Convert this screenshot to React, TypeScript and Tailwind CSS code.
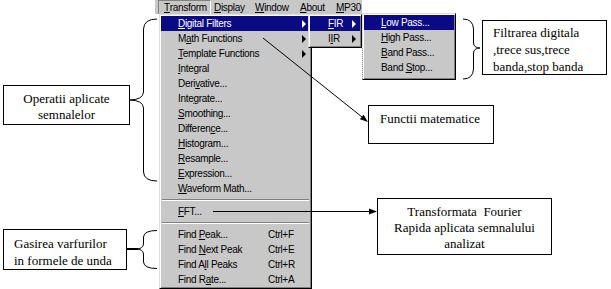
import React from "react";

type Item = {
	label: React.ReactNode;
	shortcut?: string;
	sub?: boolean;
	active?: boolean;
};

const mainItems: (Item | "sep")[] = [
	{ label: <><u>D</u>igital Filters</>, sub: true, active: true },
	{ label: <>M<u>a</u>th Functions</>, sub: true },
	{ label: <><u>T</u>emplate Functions</>, sub: true },
	{ label: <><u>I</u>ntegral</> },
	{ label: <>Deri<u>v</u>ative...</> },
	{ label: <>Inte<u>g</u>rate...</> },
	{ label: <><u>S</u>moothing...</> },
	{ label: <>Differen<u>c</u>e...</> },
	{ label: <><u>H</u>istogram...</> },
	{ label: <><u>R</u>esample...</> },
	{ label: <><u>E</u>xpression...</> },
	{ label: <><u>W</u>aveform Math...</> },
	"sep",
	{ label: <><u>F</u>FT...</> },
	"sep",
	{ label: <>Find <u>P</u>eak...</>, shortcut: "Ctrl+F" },
	{ label: <>Find <u>N</u>ext Peak</>, shortcut: "Ctrl+E" },
	{ label: <>Find A<u>l</u>l Peaks</>, shortcut: "Ctrl+R" },
	{ label: <>Find R<u>a</u>te...</>, shortcut: "Ctrl+A" },
];

const menuFont = "font-['Liberation_Sans'] text-[10px] tracking-[-0.3px]";
const panel =
	"absolute bg-[#c8c8c8] border border-t-[#dfdfdf] border-l-[#dfdfdf] border-r-black border-b-black shadow-[inset_1px_1px_0_#fff,inset_-1px_-1px_0_#808080] p-px";

function Arrow({ white }: { white?: boolean }) {
	return (
		<span
			className={`w-0 h-0 border-y-[4px] border-y-transparent border-l-[4px] ${
				white ? "border-l-white" : "border-l-black"
			}`}
		/>
	);
}

function Row({ item, pl = "pl-[17px]" }: { item: Item; pl?: string }) {
	return (
		<div
			className={`h-[15px] flex items-center ${pl} pr-[4px] ${
				item.active ? "bg-[#0a0a84] text-white" : "text-black"
			}`}
		>
			<span className="w-[90px] whitespace-nowrap">{item.label}</span>
			{item.shortcut && <span className="whitespace-nowrap">{item.shortcut}</span>}
			{item.sub && (
				<span className="ml-auto flex">
					<Arrow white={item.active} />
				</span>
			)}
		</div>
	);
}

function Separator() {
	return (
		<div className="h-[8px] flex items-center px-px">
			<div className="w-full h-[2px] border-t border-t-[#808080] border-b border-b-white" />
		</div>
	);
}

function Note({
	className,
	children,
}: {
	className: string;
	children: React.ReactNode;
}) {
	return (
		<div
			className={`absolute bg-white border border-black text-black font-['Liberation_Serif'] text-[13px] ${className}`}
		>
			{children}
		</div>
	);
}

export default function App() {
	return (
		<div className="relative w-[611px] h-[289px] bg-white overflow-hidden">
			{/* menu bar */}
			<div className={`absolute left-[155px] top-0 w-[207px] h-[14px] bg-[#c8c8c8] flex items-center pl-[3px] ${menuFont}`}>
				<span className="w-[53px] h-[14px] flex items-center pl-[5px] border-l border-t border-l-[#808080] border-t-[#808080] border-r border-r-white">
					<u>T</u>ransform
				</span>
				<span className="w-[41px] pl-[3px]"><u>D</u>isplay</span>
				<span className="w-[45px] pl-[3px]"><u>W</u>indow</span>
				<span className="w-[36px] pl-[3px]"><u>A</u>bout</span>
				<span className="w-[29px] pl-[3px]"><u>M</u>P30</span>
			</div>

			{/* transform dropdown */}
			<div className={`${panel} left-[159px] top-[14px] w-[153px] h-[275px] flex flex-col ${menuFont}`}>
				{mainItems.map((it, i) =>
					it === "sep" ? <Separator key={i} /> : <Row key={i} item={it} />
				)}
			</div>

			{/* FIR / IIR submenu */}
			<div className={`${panel} left-[308px] top-[14px] w-[54px] h-[34px] flex flex-col ${menuFont}`}>
				<Row item={{ label: <><u>F</u>IR</>, sub: true, active: true }} pl="pl-[18px]" />
				<Row item={{ label: <>I<u>I</u>R</>, sub: true }} pl="pl-[18px]" />
			</div>

			{/* filter submenu */}
			<div className={`${panel} left-[362px] top-[13px] w-[94px] h-[67px] flex flex-col ${menuFont}`}>
				<Row item={{ label: <><u>L</u>ow Pass...</>, active: true }} />
				<Row item={{ label: <><u>H</u>igh Pass...</> }} />
				<Row item={{ label: <><u>B</u>and Pass...</> }} />
				<Row item={{ label: <>Band <u>S</u>top...</> }} />
			</div>

			{/* annotation boxes */}
			<Note className="left-[482px] top-[20px] w-[125px] h-[55px] pl-[10px] pt-[3px] leading-[17px]">
				<div>Filtrarea digitala</div>
				<div>,trece sus,trece</div>
				<div>banda,stop banda</div>
			</Note>
			<Note className="left-[3px] top-[85px] w-[127px] h-[40px] pt-[5px] leading-[16px] text-center">
				<div>Operatii aplicate</div>
				<div>semnalelor</div>
			</Note>
			<Note className="left-[368px] top-[105px] w-[126px] h-[39px] pl-[11px] pt-[5px] leading-[16px]">
				Functii matematice
			</Note>
			<Note className="left-[377px] top-[198px] w-[175px] h-[57px] pt-[5px] leading-[16px] text-center">
				<div>Transformata&nbsp; Fourier</div>
				<div>Rapida aplicata semnalului</div>
				<div>analizat</div>
			</Note>
			<Note className="left-[3px] top-[229px] w-[124px] h-[41px] pl-[10px] pt-[5px] leading-[17px]">
				<div>Gasirea varfurilor</div>
				<div>in formele de unda</div>
			</Note>

			{/* connectors */}
			<svg className="absolute left-0 top-0 pointer-events-none" width="611" height="289" viewBox="0 0 611 289">
				<g fill="none" stroke="#000" strokeWidth="1">
					<path d="M157 19 Q144 19 143.5 29 L143.5 92 Q143 100 129 100 Q143 100 143.5 108 L143.5 172 Q144 181 157 181" />
					<path d="M157 230.5 Q144 230.5 143.5 237 L143.5 244 Q143 249 136 249 Q143 249 143.5 254 L143.5 262 Q144 268.5 157 268.5" />
					<path d="M127 249 L138 249" strokeWidth="2" />
					<path d="M463 19 Q473 19 473.5 29 L473.5 43 Q474 48 480 48 Q474 48 473.5 53 L473.5 69 Q473 79 463 79" />
					<path d="M263 38 L362 117" />
					<path d="M213 211.5 L371 211.5" />
					<path d="M362.5 48 L362.5 79" stroke="#9a9a9a" strokeDasharray="1 1" />
				</g>
				<polygon points="368,122 359.9,119.3 363.6,114.7" fill="#000" />
				<polygon points="377,211.5 369,208.5 369,214.5" fill="#000" />
			</svg>
		</div>
	);
}
